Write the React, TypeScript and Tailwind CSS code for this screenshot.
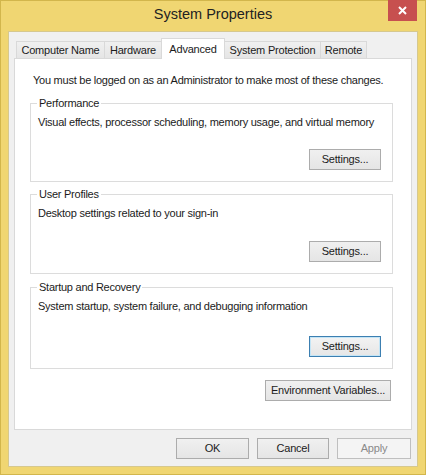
import React from "react";

const font = { fontFamily: '"Liberation Sans", Arial, sans-serif' };

function Btn({
    label,
    className = "",
    focused = false,
    disabled = false,
}: {
    label: string;
    className?: string;
    focused?: boolean;
    disabled?: boolean;
}) {
    const tone = disabled
        ? "border-[#bfbfbf] bg-[#f4f4f4] text-[#8a8a8a]"
        : focused
        ? "border-[#3c7fb1] bg-gradient-to-b from-[#f3f3f3] to-[#e6e6e6] text-[#1b1b1b] shadow-[inset_0_0_0_1px_#c4e5f6]"
        : "border-[#acacac] bg-gradient-to-b from-[#f0f0f0] to-[#e5e5e5] text-[#1b1b1b]";
    return (
        <button
            className={`flex h-[21px] items-center justify-center border text-[11px] tracking-[-0.2px] ${tone} ${className}`}
        >
            {label}
        </button>
    );
}

function Group({
    title,
    desc,
    height,
}: {
    title: string;
    desc: string;
    height: string;
}) {
    return (
        <div className={`relative flex ${height} flex-col border border-[#dcdcdc] pb-[11px] pl-[7px] pr-[11px] pt-[11px]`}>
            {/* legend sits over the top border */}
            <span className="absolute -top-[8px] left-[6px] bg-white px-[2px] text-[11px] leading-[14px] tracking-[-0.25px] text-[#1b1b1b]">
                {title}
            </span>
            <p className="whitespace-nowrap text-[11px] leading-[14px] tracking-[-0.25px] text-[#1b1b1b]">{desc}</p>
            <div className="mt-auto flex justify-end">
                <Btn label="Settings..." className="w-[72px]" focused={title === "Startup and Recovery"} />
            </div>
        </div>
    );
}

const tabs = [
    { t: "Computer Name", w: "w-[89px] ml-0" },
    { t: "Hardware", w: "w-[58px] -ml-px" },
    { t: "Advanced", w: "w-[64px] -ml-px" },
    { t: "System Protection", w: "w-[97px] -ml-px" },
    { t: "Remote", w: "w-[47px] -ml-px" },
];

export default function App() {
    return (
        <div style={font} className="flex h-[475px] w-[426px] flex-col border border-[#d2b64c] bg-[#f0d672]">
            {/* Title bar */}
            <div className="relative flex h-[30px] items-center justify-center">
                <span className="-mt-[2px] text-[14.5px] text-[#222]">System Properties</span>
                <div className="absolute right-[8px] top-[-1px] flex h-[21px] w-[29px] items-center justify-center bg-[#c7504f]">
                    <svg width="9" height="9" viewBox="0 0 9 9">
                        <path d="M1 1L8 8M8 1L1 8" stroke="white" strokeWidth="2" />
                    </svg>
                </div>
            </div>

            {/* Client area */}
            <div className="mx-[7px] mb-[7px] flex flex-1 flex-col border border-[#d6c88e] bg-[#f0f0f0] px-[5px] pt-[6px]">
                {/* Tabs */}
                <div className="relative z-10 -mb-px flex h-[21px] items-end pl-[2px]">
                    {tabs.map(({ t, w }) =>
                        t === "Advanced" ? (
                            <div
                                key={t}
                                className={`flex h-[21px] items-start justify-center border border-b-0 border-[#d9d9d9] bg-white pt-[2px] text-[11px] tracking-[-0.2px] text-[#1b1b1b] ${w}`}
                            >
                                {t}
                            </div>
                        ) : (
                            <div
                                key={t}
                                className={`flex h-[18px] items-center justify-center border border-[#d9d9d9] bg-gradient-to-b from-[#f0f0f0] to-[#e5e5e5] text-[11px] tracking-[-0.2px] text-[#1b1b1b] ${w}`}
                            >
                                {t}
                            </div>
                        )
                    )}
                </div>

                {/* Tab panel */}
                <div className="flex h-[372px] flex-col border border-[#d9d9d9] bg-white pl-[15px] pr-[18px] pt-[14px]">
                    <p className="whitespace-nowrap pl-[3px] text-[11px] leading-[14px] tracking-[-0.25px] text-[#1b1b1b]">
                        You must be logged on as an Administrator to make most of these changes.
                    </p>
                    <div className="mt-[16px]">
                        <Group
                            title="Performance"
                            desc="Visual effects, processor scheduling, memory usage, and virtual memory"
                            height="h-[79px]"
                        />
                    </div>
                    <div className="mt-[12px]">
                        <Group title="User Profiles" desc="Desktop settings related to your sign-in" height="h-[80px]" />
                    </div>
                    <div className="mt-[13px]">
                        <Group
                            title="Startup and Recovery"
                            desc="System startup, system failure, and debugging information"
                            height="h-[82px]"
                        />
                    </div>
                    <div className="mt-[11px] flex justify-end pr-[2px]">
                        <Btn label="Environment Variables..." className="w-[126px]" />
                    </div>
                </div>

                {/* Dialog buttons */}
                <div className="mt-[8px] flex justify-end gap-[8px] pr-[1px]">
                    <Btn label="OK" className="w-[73px]" />
                    <Btn label="Cancel" className="w-[72px]" />
                    <Btn label="Apply" className="w-[74px]" disabled />
                </div>
            </div>
        </div>
    );
}
